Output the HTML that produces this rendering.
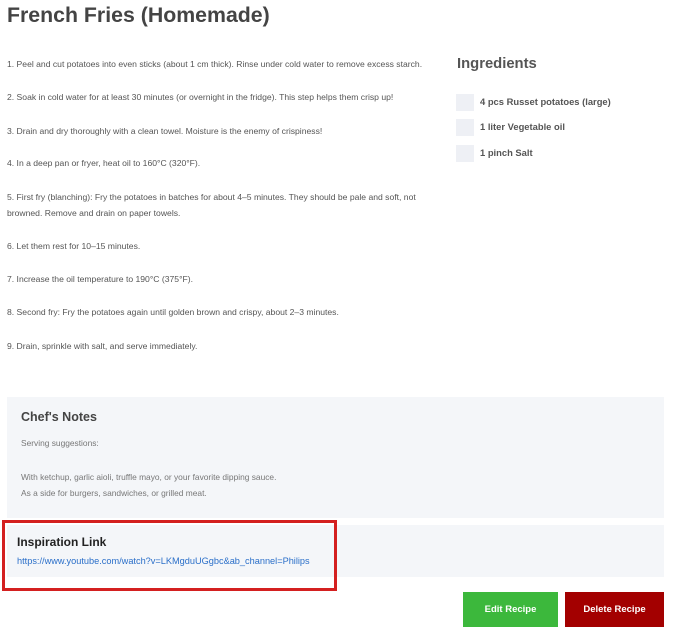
<!DOCTYPE html>
<html><head><meta charset="utf-8"><style>
*{margin:0;padding:0;box-sizing:border-box}
body{width:683px;height:635px;background:#fff;font-family:"Liberation Sans",sans-serif;color:#555;position:relative;overflow:hidden}
.a{position:absolute;white-space:nowrap}
h1{position:absolute;left:7px;top:3px;font-size:21.3px;font-weight:bold;color:#444}
.s{font-size:8.6px;color:#555}
.cb{position:absolute;left:456px;width:18px;height:17px;background:#eef0f5}
.ing{font-size:9.4px;font-weight:bold;color:#555}
</style></head><body>
<h1>French Fries (Homemade)</h1>
<div class="a s" style="left:7px;top:59px">1. Peel and cut potatoes into even sticks (about 1 cm thick). Rinse under cold water to remove excess starch.</div>
<div class="a s" style="left:7px;top:92px">2. Soak in cold water for at least 30 minutes (or overnight in the fridge). This step helps them crisp up!</div>
<div class="a s" style="left:7px;top:126px">3. Drain and dry thoroughly with a clean towel. Moisture is the enemy of crispiness!</div>
<div class="a s" style="left:7px;top:158px">4. In a deep pan or fryer, heat oil to 160°C (320°F).</div>
<div class="a s" style="left:7px;top:192px">5. First fry (blanching): Fry the potatoes in batches for about 4–5 minutes. They should be pale and soft, not</div>
<div class="a s" style="left:7px;top:208px">browned. Remove and drain on paper towels.</div>
<div class="a s" style="left:7px;top:241px">6. Let them rest for 10–15 minutes.</div>
<div class="a s" style="left:7px;top:274px">7. Increase the oil temperature to 190°C (375°F).</div>
<div class="a s" style="left:7px;top:307px">8. Second fry: Fry the potatoes again until golden brown and crispy, about 2–3 minutes.</div>
<div class="a s" style="left:7px;top:341px">9. Drain, sprinkle with salt, and serve immediately.</div>

<div class="a" style="left:457px;top:56px;font-size:14.8px;font-weight:bold;color:#555">Ingredients</div>
<div class="cb" style="top:94px"></div><div class="a ing" style="left:480px;top:96px">4 pcs Russet potatoes (large)</div>
<div class="cb" style="top:119px"></div><div class="a ing" style="left:480px;top:121px">1 liter Vegetable oil</div>
<div class="cb" style="top:145px"></div><div class="a ing" style="left:480px;top:147px">1 pinch Salt</div>

<div class="a" style="left:7px;top:397px;width:657px;height:121px;background:#f4f6f9"></div>
<div class="a" style="left:21px;top:410px;font-size:12.5px;font-weight:bold;color:#444">Chef's Notes</div>
<div class="a s" style="left:21px;top:438px;color:#777;font-size:8.4px">Serving suggestions:</div>
<div class="a s" style="left:21px;top:472px;color:#777;font-size:8.4px">With ketchup, garlic aioli, truffle mayo, or your favorite dipping sauce.</div>
<div class="a s" style="left:21px;top:488px;color:#777;font-size:8.4px">As a side for burgers, sandwiches, or grilled meat.</div>

<div class="a" style="left:7px;top:525px;width:657px;height:52px;background:#f4f6f9"></div>
<div class="a" style="left:2px;top:520px;width:335px;height:71px;border:3px solid #d42020"></div>
<div class="a" style="left:17px;top:535px;font-size:12px;font-weight:bold;color:#222">Inspiration Link</div>
<div class="a" style="left:17px;top:556px;font-size:9.2px;color:#2a6fc9">https://www.youtube.com/watch?v=LKMgduUGgbc&amp;ab_channel=Philips</div>

<div class="a" style="left:463px;top:592px;width:95px;height:35px;background:#3cb83c;color:#fff;font-size:9.5px;font-weight:bold;text-align:center;line-height:35px">Edit Recipe</div>
<div class="a" style="left:565px;top:592px;width:99px;height:35px;background:#a30000;color:#fff;font-size:9.5px;font-weight:bold;text-align:center;line-height:35px">Delete Recipe</div>
</body></html>
